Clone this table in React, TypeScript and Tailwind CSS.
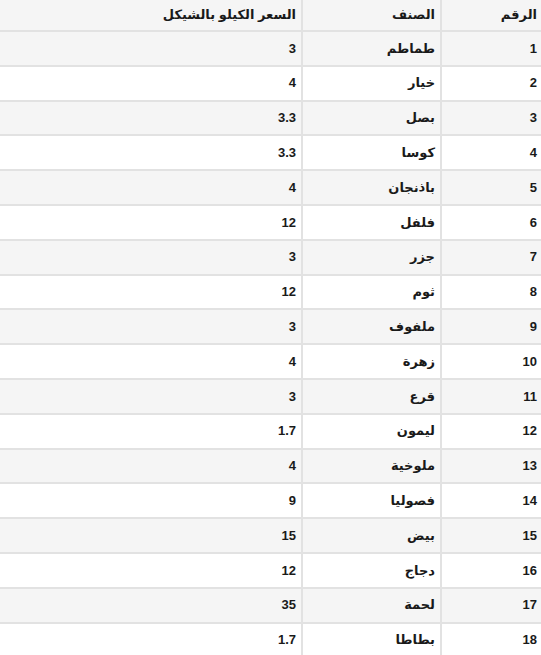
import React from "react";

const ROWS: [number, string, string][] = [
  [1, "طماطم", "3"],
  [2, "خيار", "4"],
  [3, "بصل", "3.3"],
  [4, "كوسا", "3.3"],
  [5, "باذنجان", "4"],
  [6, "فلفل", "12"],
  [7, "جزر", "3"],
  [8, "ثوم", "12"],
  [9, "ملفوف", "3"],
  [10, "زهرة", "4"],
  [11, "قرع", "3"],
  [12, "ليمون", "1.7"],
  [13, "ملوخية", "4"],
  [14, "فصوليا", "9"],
  [15, "بيض", "15"],
  [16, "دجاج", "12"],
  [17, "لحمة", "35"],
  [18, "بطاطا", "1.7"],
];

export default function App() {
  return (
    <div
      dir="rtl"
      className="w-[541px] bg-white text-[13px] font-bold text-[#1a1a1a]"
      style={{ fontFamily: '"Liberation Sans", Arial, "DejaVu Sans", sans-serif' }}
    >
      <table className="w-full border-collapse">
        <thead>
          <tr className="bg-[#f5f5f5]">
            <th className="w-[100px] h-[31px] border-b-2 border-l-2 border-[#e2e2e2] px-[4px] text-right align-middle font-bold">الرقم</th>
            <th className="w-[139px] h-[31px] border-b-2 border-l-2 border-[#e2e2e2] px-[5px] text-right align-middle font-bold">الصنف</th>
            <th className="h-[31px] border-b-2 border-[#e2e2e2] px-[5px] text-right align-middle font-bold">السعر الكيلو بالشيكل</th>
          </tr>
        </thead>
        <tbody>
          {ROWS.map(([n, name, price]) => (
            <tr key={n} className={n % 2 === 1 ? "bg-[#f5f5f5]" : "bg-white"}>
              <td className="h-[34.8px] border-b-2 border-l-2 border-[#e2e2e2] px-[4px] text-right align-middle">{n}</td>
              <td className="h-[34.8px] border-b-2 border-l-2 border-[#e2e2e2] px-[5px] text-right align-middle">{name}</td>
              <td className="h-[34.8px] border-b-2 border-[#e2e2e2] px-[5px] text-right align-middle">{price}</td>
            </tr>
          ))}
        </tbody>
      </table>
    </div>
  );
}
